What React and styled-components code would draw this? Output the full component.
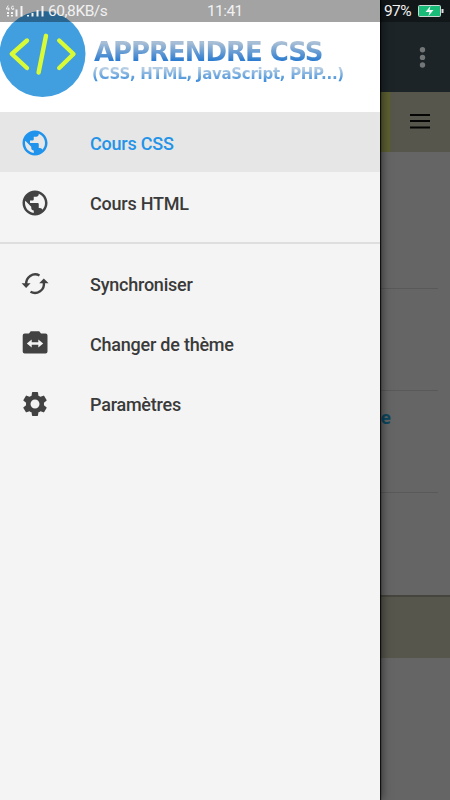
import React from "react";
import styled, { createGlobalStyle } from "styled-components";
import { MdPublic, MdSettings } from "react-icons/md";

const GlobalStyle = createGlobalStyle`
  * { box-sizing: border-box; }
  body { margin: 0; background: #666; font-family: Roboto, "Liberation Sans", sans-serif; }
`;

const Screen = styled.div`
  position: relative;
  width: 450px;
  height: 800px;
  overflow: hidden;
`;

const Page = styled.main`
  height: 100%;
  display: flex;
  flex-direction: column;
  background: #656565;
`;

const AppBar = styled.header`
  height: 92px;
  padding: 22px 15px 0 0;
  display: flex;
  align-items: center;
  justify-content: flex-end;
  background: #1c2427;
`;

const TabBar = styled.nav`
  height: 60px;
  padding-right: 19px;
  display: flex;
  align-items: center;
  justify-content: flex-end;
  background: linear-gradient(90deg, #5b5f31 390px, #56564c 391px);
`;

const Articles = styled.section`
  height: 443px;
  padding-right: 12px;
`;

const Article = styled.article`
  height: ${(p) => p.$height}px;
  padding: ${(p) => p.$pad || 0}px 0 0 375px;
  border-bottom: ${(p) => (p.$last ? "0" : "1px solid #595959")};
  color: #0b465e;
  font: bold 18px/22px "Open Sans", sans-serif;
`;

const Footer = styled.footer`
  height: 63px;
  border-top: 2px solid #45443d;
  background: #56564c;
`;

const Drawer = styled.aside`
  position: absolute;
  top: 0;
  left: 0;
  width: 380px;
  height: 100%;
  background: #f4f4f4;
  box-shadow: 1px 0 1px rgba(0, 0, 0, 0.75), 2px 0 9px rgba(0, 0, 0, 0.5);
`;

const Banner = styled.div`
  height: 112px;
  padding-top: 11px;
  display: flex;
  align-items: flex-start;
  background: #fff;
`;

const LogoMark = styled.svg`
  flex: none;
  width: 86px;
  height: 87px;
`;

const BrandText = styled.div`
  padding: 28px 0 0 8px;
  white-space: nowrap;
  font-family: "DejaVu Sans", sans-serif;
  font-weight: bold;
`;

const BrandTitle = styled.div`
  width: max-content;
  height: 26px;
  font-size: 26px;
  line-height: 26px;
  letter-spacing: -1.05px;
  color: transparent;
  background: linear-gradient(#a9bfd5 14%, #2478d0 88%);
  background-clip: text;
`;

const BrandSubtitle = styled.div`
  width: max-content;
  margin: 1px 0 0 -2px;
  height: 16px;
  font-size: 15px;
  line-height: 16px;
  letter-spacing: -0.28px;
  color: transparent;
  background: linear-gradient(#b5cde3 15%, #3f8edb 94%);
  background-clip: text;
`;

const MenuGroup = styled.nav`
  padding: ${(p) => (p.$second ? "10px 0 0" : "0 0 10px")};
  border-bottom: ${(p) => (p.$second ? "0" : "2px solid #dedede")};
`;

const MenuItem = styled.div`
  height: 60px;
  padding: ${(p) => (p.$lowered ? 2 : 1)}px 0 0 20px;
  display: flex;
  align-items: center;
  gap: 40px;
  font-size: 18px;
  font-weight: 500;
  letter-spacing: -0.23px;
  color: ${(p) => (p.$active ? "#2393e8" : "#3a3a3a")};
  background: ${(p) => (p.$active ? "#e6e6e6" : "transparent")};

  svg {
    width: 30px;
    height: 30px;
    margin-top: -1px;
    flex: none;
    color: ${(p) => (p.$active ? "#2093ec" : "#424242")};
  }
`;

const StatusBar = styled.div`
  position: absolute;
  top: 0;
  left: 0;
  width: 100%;
  height: 22px;
  display: grid;
  grid-template-columns: 48px 159px 173px 31px 1fr;
  align-items: center;
  color: #f1f1f1;
  line-height: 22px;
  white-space: nowrap;
  background: linear-gradient(90deg, rgba(0, 0, 0, 0.36) 380px, rgba(0, 0, 0, 0.38) 380px);
`;

const StatusText = styled.span`
  padding-left: ${(p) => p.$inset || 0}px;
  font-size: 15.5px;
  letter-spacing: ${(p) => p.$tracking || 0}px;
`;

const SignalIcon = () => (
  <svg width="48" height="22" viewBox="0 0 48 22" fill="none" stroke="#f2f2f2">
    <path d="M8.2 5.5 6.3 9H9.6M8.7 7.5v3M13.7 6.3q-2-1-2.3 1.4 0 2.4 2.3 1.6V8.2h-1" strokeWidth="1" />
    <path d="M8 12v4.5M12 12v4.5" strokeWidth="2" strokeDasharray="2 1" />
    <path d="M16.5 9.5v7M21.5 6v10.5M28 15v1.5M32.5 13v3.5M37.5 10v6.5M42.5 6v10.5" strokeWidth="2" />
  </svg>
);

const BatteryIcon = () => (
  <svg width="36" height="22" viewBox="0 0 36 22">
    <rect x="7.5" y="5.5" width="22" height="11" rx="1" fill="#18bb78" stroke="#cbd7d2" />
    <rect x="30.5" y="9" width="2" height="4" fill="#dedede" />
    <path d="m19.5 6-5 6h4l-1 4 5-6h-4z" fill="#f4fff9" />
  </svg>
);

const MoreIcon = () => (
  <svg width="24" height="24" viewBox="0 0 24 24" fill="#727677">
    <circle cx="11.5" cy="4.8" r="2.7" />
    <circle cx="11.5" cy="12.4" r="2.7" />
    <circle cx="11.5" cy="20" r="2.7" />
  </svg>
);

const HamburgerIcon = () => (
  <svg width="22" height="16" viewBox="0 0 22 16" stroke="#050505" strokeWidth="2">
    <path d="M1 1h20M1 7h20M1 13.5h20" />
  </svg>
);

const SyncIcon = () => (
  <svg viewBox="0 0 30 30">
    <g fill="none" stroke="currentColor" strokeWidth="2.4">
      <path d="M6.3 15.5A9 9 0 0 1 19.5 6.5" />
      <path d="M23.8 13.5A9 9 0 0 1 10.5 22.8" />
    </g>
    <path d="M1.6 14.3h9l-4.5 4.7zM19.2 14.3l4.6-4.9 4.8 4.9z" fill="currentColor" />
  </svg>
);

const CameraSwapIcon = () => (
  <svg viewBox="0 0 30 30">
    <path
      fill="currentColor"
      fillRule="evenodd"
      d="M10.7 2.2h8.5L21 4.6h4.5Q27.5 4.6 27.5 6.6V22.5Q27.5 24.5 25.5 24.5H4.7Q2.7 24.5 2.7 22.5V6.6Q2.7 4.6 4.7 4.6H9zM6.8 14.5 11.7 18.5V15.7H18.3V18.5L23.2 14.5 18.3 10.5V13.3H11.7V10.5z"
    />
  </svg>
);

export default function App() {
  return (
    <>
      <GlobalStyle />
      <Screen>
        <Page>
          <AppBar><MoreIcon /></AppBar>
          <TabBar><HamburgerIcon /></TabBar>
          <Articles>
            <Article $height={137} />
            <Article $height={102} />
            <Article $height={102} $pad={15}>le</Article>
            <Article $height={102} $last />
          </Articles>
          <Footer />
        </Page>
        <Drawer>
          <Banner>
            <LogoMark viewBox="0 0 86 87">
              <circle cx="42.5" cy="43" r="43" fill="#419edf" />
              <path
                d="M27 29.5 11.8 43 27 57M46 24.8 38.6 61.5M59.2 29.5 73.5 43 59.2 57"
                fill="none"
                stroke="#d9fb36"
                strokeWidth="4.4"
                strokeLinecap="round"
                strokeLinejoin="round"
              />
            </LogoMark>
            <BrandText>
              <BrandTitle>APPRENDRE CSS</BrandTitle>
              <BrandSubtitle>(CSS, HTML, JavaScript, PHP...)</BrandSubtitle>
            </BrandText>
          </Banner>
          <MenuGroup>
            <MenuItem $active $lowered><MdPublic />Cours CSS</MenuItem>
            <MenuItem $lowered><MdPublic />Cours HTML</MenuItem>
          </MenuGroup>
          <MenuGroup $second>
            <MenuItem><SyncIcon />Synchroniser</MenuItem>
            <MenuItem><CameraSwapIcon />Changer de thème</MenuItem>
            <MenuItem><MdSettings />Paramètres</MenuItem>
          </MenuGroup>
        </Drawer>
        <StatusBar>
          <SignalIcon />
          <StatusText $tracking={-0.45}>60,8KB/s</StatusText>
          <StatusText $tracking={-0.6}>11:41</StatusText>
          <StatusText $inset={4} $tracking={-0.6}>97%</StatusText>
          <BatteryIcon />
        </StatusBar>
      </Screen>
    </>
  );
}
